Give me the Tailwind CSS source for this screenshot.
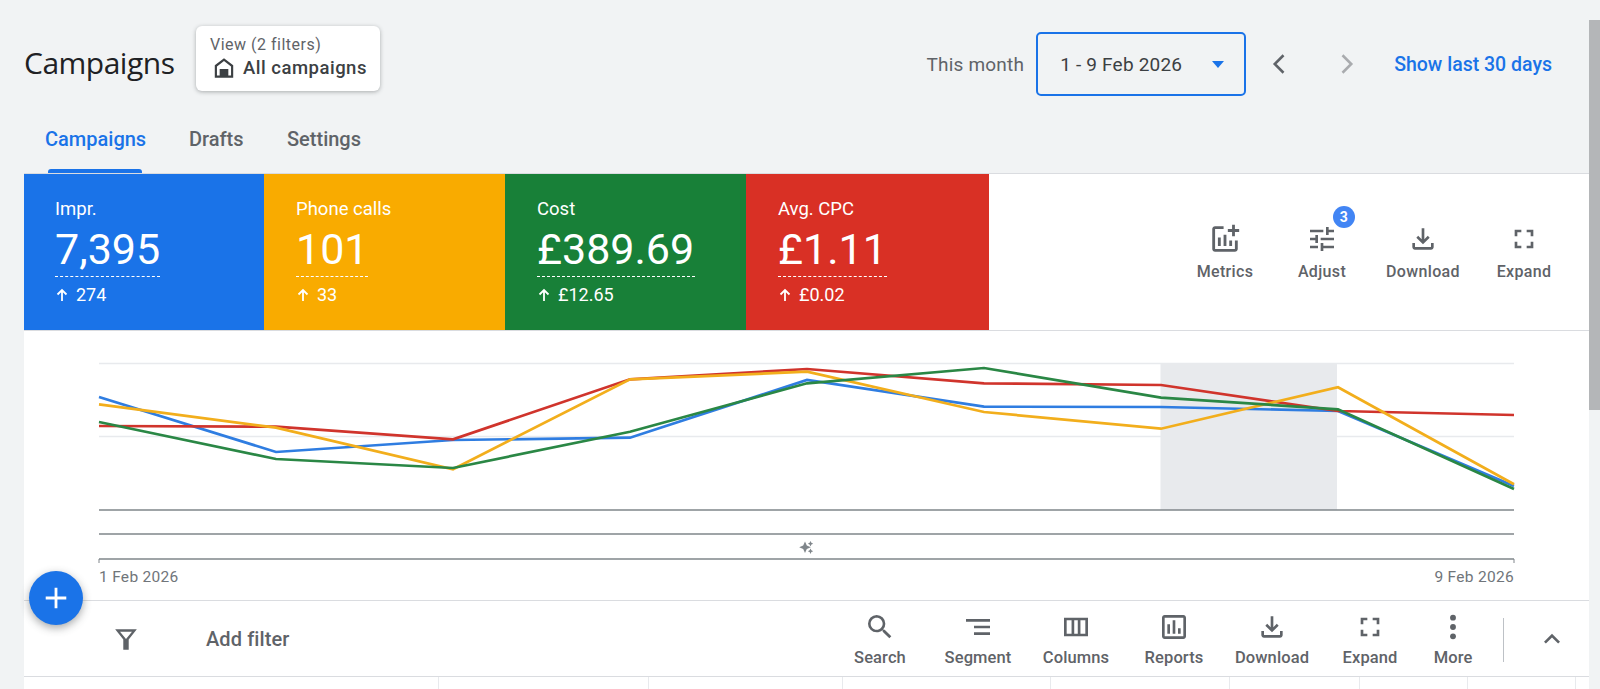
<!DOCTYPE html>
<html lang="en">

<head>
  <meta charset="UTF-8" />
  <title>Campaigns</title>
  <script src="https://cdn.jsdelivr.net/npm/@tailwindcss/browser@4"></script>
</head>

<body class="bg-[#f1f3f4] h-[689px] overflow-hidden font-['Roboto',sans-serif]">
  <div class="relative flex h-[689px]">
    <div class="w-[1589px] pl-[24px]">

      <!-- header -->
      <div class="flex items-center h-[128px] -ml-[24px] pl-[24px]">
        <h1 class="font-['Open_Sans',sans-serif] text-[30px] tracking-[-0.5px] text-[#202124] w-[172px] -mt-[3px]">Campaigns</h1>
        <div class="w-[184px] h-[65px] -mt-[12px] bg-white rounded-[6px] shadow-[0_1px_4px_rgba(60,64,67,0.4)] pl-[14px] pt-[9px]">
          <div class="text-[16px] leading-[20px] text-[#5f6368] tracking-[0.5px]">View (2 filters)</div>
          <div class="flex items-center gap-[6px] pl-[1px]">
            <svg class="w-[26px] h-[26px] fill-[#3c4043]" viewBox="0 0 24 24"><path fill-rule="evenodd" d="M12 3 3.500 9.500V21h17V9.500L12 3zm6.500 16H16v-6H8v6H5.500v-8.500L12 5.500l6.500 5V19z" /><path d="M9 14.500h6V19.500H9z" /></svg>
            <span class="text-[18.500px] font-medium text-[#3c4043] tracking-[0.5px]">All campaigns</span>
          </div>
        </div>
        <div class="ml-auto flex items-center text-[#5f6368]">
          <span class="text-[19px] leading-[28px] pt-[2px] tracking-[0.2px]">This month</span>
          <div class="ml-[12px] w-[210px] h-[64px] border-2 border-[#1a73e8] rounded-[5px] flex items-center pl-[22px] pr-[20px] justify-between">
            <span class="text-[19px] leading-[28px] pt-[2px] text-[#3c4043] tracking-[0.2px]">1 - 9 Feb 2026</span>
            <span class="w-0 h-0 border-x-[6px] border-x-transparent border-t-[7px] border-t-[#1a73e8]"></span>
          </div>
          <svg class="ml-[20px] w-[28px] h-[28px] stroke-[#5f6368] fill-none" viewBox="0 0 24 24" stroke-width="2.200"><path d="M15 4.500 7.500 12l7.500 7.500" /></svg>
          <svg class="ml-[38px] w-[28px] h-[28px] stroke-[#a9abae] fill-none" viewBox="0 0 24 24" stroke-width="2.200"><path d="M9 4.500 16.500 12 9 19.500" /></svg>
          <a class="ml-[34px] mr-[37px] text-[19.500px] leading-[28px] pt-[2px] font-medium text-[#1a73e8]">Show last 30 days</a>
        </div>
      </div>

      <!-- tabs -->
      <div class="flex h-[45px] text-[20px] leading-[22px] font-medium text-[#5f6368]">
        <div class="relative w-[165px] pl-[21px] text-[#1a73e8]">Campaigns
          <span class="absolute left-[24px] bottom-0 w-[94px] h-[4px] rounded-t-[3px] bg-[#1a73e8]"></span>
        </div>
        <div class="w-[98px]">Drafts</div>
        <div>Settings</div>
      </div>

      <!-- metrics -->
      <div class="flex h-[158px] bg-white border-y border-[#dadce0]">
        <div class="w-[240px] bg-[#1a73e8] pl-[31px] pt-[23px] text-white">
          <div class="text-[18.500px] leading-[24px]">Impr.</div>
          <div class="w-[105px] text-[43px] leading-[48px] mt-[4px] border-b border-dashed border-white h-[52px]">7,395</div>
          <div class="flex items-center gap-[7px] mt-[8px] text-[18px] leading-[20px]">
            <svg class="w-[14px] h-[14px] stroke-white fill-none" viewBox="0 0 14 14" stroke-width="1.800"><path d="M7 13V2M2.500 6.500 7 2l4.500 4.500" /></svg>274
          </div>
        </div>
        <div class="w-[241px] bg-[#f9ab00] pl-[32px] pt-[23px] text-white">
          <div class="text-[18.500px] leading-[24px]">Phone calls</div>
          <div class="w-[72px] text-[43px] leading-[48px] mt-[4px] border-b border-dashed border-white h-[52px]">101</div>
          <div class="flex items-center gap-[7px] mt-[8px] text-[18px] leading-[20px]">
            <svg class="w-[14px] h-[14px] stroke-white fill-none" viewBox="0 0 14 14" stroke-width="1.800"><path d="M7 13V2M2.500 6.500 7 2l4.500 4.500" /></svg>33
          </div>
        </div>
        <div class="w-[241px] bg-[#188038] pl-[32px] pt-[23px] text-white">
          <div class="text-[18.500px] leading-[24px]">Cost</div>
          <div class="w-[158px] text-[43px] leading-[48px] mt-[4px] border-b border-dashed border-white h-[52px]">£389.69</div>
          <div class="flex items-center gap-[7px] mt-[8px] text-[18px] leading-[20px]">
            <svg class="w-[14px] h-[14px] stroke-white fill-none" viewBox="0 0 14 14" stroke-width="1.800"><path d="M7 13V2M2.500 6.500 7 2l4.500 4.500" /></svg>£12.65
          </div>
        </div>
        <div class="w-[243px] bg-[#d93025] pl-[32px] pt-[23px] text-white">
          <div class="text-[18.500px] leading-[24px]">Avg. CPC</div>
          <div class="w-[109px] text-[43px] leading-[48px] mt-[4px] border-b border-dashed border-white h-[52px]">£1.11</div>
          <div class="flex items-center gap-[7px] mt-[8px] text-[18px] leading-[20px]">
            <svg class="w-[14px] h-[14px] stroke-white fill-none" viewBox="0 0 14 14" stroke-width="1.800"><path d="M7 13V2M2.500 6.500 7 2l4.500 4.500" /></svg>£0.02
          </div>
        </div>
        <div class="flex ml-[186px] text-[16px] font-medium text-[#5f6368] tracking-[0.35px]">
          <div class="w-[100px] flex flex-col items-center pt-[48px] gap-[4px]">
            <svg class="w-[34px] h-[34px] fill-[#5f6368]" viewBox="0 0 24 24"><path d="M22 5v2h-3v3h-2V7h-3V5h3V2h2v3h3zm-3 14H5V5h6V3H5c-1.100 0-2 .9-2 2v14c0 1.100.9 2 2 2h14c1.100 0 2-.9 2-2v-6h-2v6zm-4-6v4h2v-4h-2zm-4 4h2V9h-2v8zm-2 0v-6H7v6h2z" /></svg>
            Metrics
          </div>
          <div class="relative w-[94px] flex flex-col items-center pt-[49px] gap-[5px]">
            <svg class="w-[32px] h-[32px] fill-[#5f6368]" viewBox="0 0 24 24"><path d="M3 17v2h6v-2H3zM3 5v2h10V5H3zm10 16v-2h8v-2h-8v-2h-2v6h2zM7 9v2H3v2h4v2h2V9H7zm14 4v-2H11v2h10zm-6-4h2V7h4V5h-4V3h-2v6z" /></svg>
            Adjust
            <span class="absolute left-[58px] top-[32px] w-[22px] h-[22px] rounded-full bg-[#4285f4] text-white text-[14px] font-bold flex items-center justify-center">3</span>
          </div>
          <div class="w-[108px] flex flex-col items-center pt-[49px] gap-[5px]">
            <svg class="w-[32px] h-[32px] fill-[#5f6368]" viewBox="0 0 24 24"><path d="M12 16 7 11l1.400-1.400 2.600 2.600V4h2v8.200l2.600-2.600L17 11l-5 5zM6 20c-.55 0-1.020-.2-1.410-.59C4.200 19.020 4 18.550 4 18v-3h2v3h12v-3h2v3c0 .55-.2 1.020-.59 1.410-.39.39-.86.59-1.410.59H6z" /></svg>
            Download
          </div>
          <div class="w-[94px] flex flex-col items-center pt-[49px] gap-[5px]">
            <svg class="w-[32px] h-[32px] fill-[#5f6368]" viewBox="0 0 24 24"><path d="M5 5h5v2H7v3H5V5zm9 0h5v5h-2V7h-3V5zm3 9h2v5h-5v-2h3v-3zM5 14h2v3h3v2H5v-5z" /></svg>
            Expand
          </div>
        </div>
      </div>

      <!-- chart -->
      <div class="bg-white h-[270px] border-b border-[#dadce0]">
        <svg class="block w-[1565px] h-[236px]" viewBox="24 331 1565 236" fill="none">
          <rect x="1160.500" y="363" width="176.500" height="147" fill="#e8eaed" />
          <path d="M99 363.500H1514M99 436.500H1514" stroke="#e8eaed" stroke-width="1.500" />
          <path d="M99 510H1514M99 534H1514M99 559H1514" stroke="#80868b" stroke-width="1.500" />
          <path d="M99 563v-4M1514 563v-4" stroke="#80868b" />
          <polyline stroke="#2f7de1" stroke-width="2.700" points="99,397 276,452 453,440 630,437.700 807,380 984,406.700 1161,407 1338,411 1514,486" />
          <polyline stroke="#d0342c" stroke-width="2.700" points="99,426 276,426.700 453,439.300 630,379.300 807,369 984,383.300 1161,385 1338,411 1514,415" />
          <polyline stroke="#f2ae1c" stroke-width="2.700" points="99,404.300 276,427.700 453,469.300 630,379.300 807,371.700 984,412 1161,428.700 1338,387.300 1514,484.300" />
          <polyline stroke="#2a8745" stroke-width="2.700" points="99,422 276,459 453,468 630,431.700 807,383.300 984,368 1161,397.700 1338,409.300 1514,489" />
          <path d="M805 541.500l1.800 4 4 1.800-4 1.800-1.800 4-1.800-4-4-1.800 4-1.800zM810.500 541l.9 1.800 1.800.9-1.800.9-.9 1.800-.9-1.800-1.800-.9 1.800-.9zM810.500 548.500l.9 1.800 1.800.9-1.800.9-.9 1.800-.9-1.800-1.800-.9 1.800-.9z" fill="#80868b" />
        </svg>
        <div class="flex justify-between pl-[75px] pr-[75px] text-[15.500px] leading-[20px] text-[#70757a] tracking-[0.3px]">
          <span>1 Feb 2026</span>
          <span>9 Feb 2026</span>
        </div>
      </div>

      <!-- filter bar and toolbar -->
      <div class="flex items-center h-[76px] bg-white border-b border-[#dadce0]">
        <svg class="ml-[89px] w-[26px] h-[26px] fill-[#5f6368]" viewBox="0 0 24 24"><path fill-rule="evenodd" d="M2 3h20l-7.500 9.500V22h-5v-9.500L2 3zm4.500 2.200L12 12l5.500-6.800h-11z" /></svg>
        <span class="ml-[67px] text-[20px] tracking-[0.1px] font-medium text-[#5f6368]">Add filter</span>
        <div class="flex ml-auto h-full text-[16.500px] font-medium text-[#5f6368] tracking-[0.1px]">
          <div class="w-[98px] flex flex-col items-center pt-[10px] gap-[3px]">
            <svg class="w-[32px] h-[32px] fill-[#5f6368]" viewBox="0 0 24 24"><path d="M15.500 14h-.79l-.28-.27A6.470 6.470 0 0 0 16 9.500 6.500 6.500 0 1 0 9.500 16c1.610 0 3.090-.59 4.230-1.570l.27.28v.79l5 4.990L20.490 19l-4.990-5zm-6 0C7.010 14 5 11.990 5 9.500S7.010 5 9.500 5 14 7.010 14 9.500 11.990 14 9.500 14z" /></svg>
            Search
          </div>
          <div class="w-[98px] flex flex-col items-center pt-[10px] gap-[3px]">
            <svg class="w-[32px] h-[32px] fill-[#5f6368]" viewBox="0 0 24 24"><path d="M9 18h12v-2H9v2zM3 6v2h18V6H3zm6 7h12v-2H9v2z" /></svg>
            Segment
          </div>
          <div class="w-[98px] flex flex-col items-center pt-[10px] gap-[3px]">
            <svg class="w-[32px] h-[32px] fill-[#5f6368]" viewBox="0 0 24 24"><path fill-rule="evenodd" d="M3 5h18v14H3V5zm2 2v10h3.670V7H5zm5.670 0v10h2.660V7h-2.660zm4.660 0v10H19V7h-3.670z" /></svg>
            Columns
          </div>
          <div class="w-[98px] flex flex-col items-center pt-[10px] gap-[3px]">
            <svg class="w-[32px] h-[32px] fill-[#5f6368]" viewBox="0 0 24 24"><path d="M19 3H5c-1.100 0-2 .9-2 2v14c0 1.100.9 2 2 2h14c1.100 0 2-.9 2-2V5c0-1.100-.9-2-2-2zm0 16H5V5h14v14zM7 10h2v7H7zm4-3h2v10h-2zm4 6h2v4h-2z" /></svg>
            Reports
          </div>
          <div class="w-[98px] flex flex-col items-center pt-[10px] gap-[3px]">
            <svg class="w-[32px] h-[32px] fill-[#5f6368]" viewBox="0 0 24 24"><path d="M12 16 7 11l1.400-1.400 2.600 2.600V4h2v8.200l2.600-2.600L17 11l-5 5zM6 20c-.55 0-1.020-.2-1.410-.59C4.200 19.020 4 18.550 4 18v-3h2v3h12v-3h2v3c0 .55-.2 1.020-.59 1.410-.39.39-.86.59-1.410.59H6z" /></svg>
            Download
          </div>
          <div class="w-[98px] flex flex-col items-center pt-[10px] gap-[3px]">
            <svg class="w-[32px] h-[32px] fill-[#5f6368]" viewBox="0 0 24 24"><path d="M5 5h5v2H7v3H5V5zm9 0h5v5h-2V7h-3V5zm3 9h2v5h-5v-2h3v-3zM5 14h2v3h3v2H5v-5z" /></svg>
            Expand
          </div>
          <div class="w-[68px] flex flex-col items-center pt-[10px] gap-[3px]">
            <svg class="w-[32px] h-[32px] fill-[#5f6368]" viewBox="0 0 24 24"><circle cx="12" cy="5" r="2.200" /><circle cx="12" cy="12" r="2.200" /><circle cx="12" cy="19" r="2.200" /></svg>
            More
          </div>
          <div class="ml-[16px] mt-[17px] h-[44px] w-px bg-[#bdc1c6]"></div>
          <svg class="ml-[32px] mr-[21px] mt-[22px] w-[32px] h-[32px] fill-[#5f6368]" viewBox="0 0 24 24"><path d="M12 8l-6 6 1.410 1.410L12 10.830l4.590 4.580L18 14z" /></svg>
        </div>
      </div>

      <!-- table header -->
      <div class="flex h-[12px] bg-white">
        <div class="w-[415px] border-r border-[#e8eaed]"></div>
        <div class="w-[210px] border-r border-[#e8eaed]"></div>
        <div class="w-[194px] border-r border-[#e8eaed]"></div>
        <div class="w-[208px] border-r border-[#e8eaed]"></div>
        <div class="w-[179px] border-r border-[#e8eaed]"></div>
        <div class="w-[130px] border-r border-[#e8eaed]"></div>
        <div class="w-[108px] border-r border-[#e8eaed]"></div>
        <div class="w-[108px] border-r border-[#e8eaed]"></div>
      </div>
    </div>

    <!-- scrollbar -->
    <div class="w-[11px]">
      <div class="mt-[20px] h-[390px] bg-[#b4b6b8]"></div>
    </div>

    <!-- add button -->
    <div class="absolute left-[29px] top-[571px] w-[54px] h-[54px] rounded-full bg-[#1a73e8] shadow-[0_3px_8px_rgba(60,64,67,0.45)] flex items-center justify-center">
      <svg class="w-[26px] h-[26px] stroke-white fill-none" viewBox="0 0 24 24" stroke-width="2.600"><path d="M12 2.500v19M2.500 12h19" /></svg>
    </div>
  </div>
</body>

</html>
